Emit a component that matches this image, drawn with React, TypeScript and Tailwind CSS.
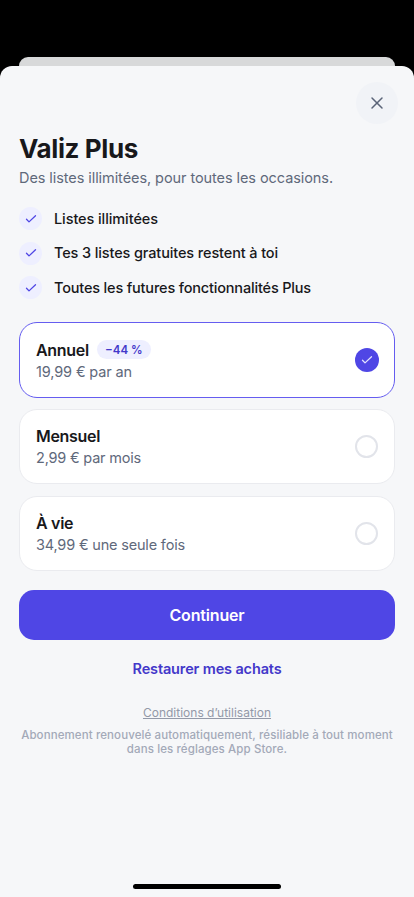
import React from "react";
import { X } from "lucide-react";

const FEATURES = [
  { label: "Listes illimitées", tracking: "tracking-[-0.085px]" },
  { label: "Tes 3 listes gratuites restent à toi", tracking: "tracking-[-0.124px]" },
  { label: "Toutes les futures fonctionnalités Plus", tracking: "tracking-[-0.175px]" },
];

const PLANS = [
  { name: "Annuel", price: "19,99 € par an", tracking: "tracking-[-0.13px]", badge: "−44 %" },
  { name: "Mensuel", price: "2,99 € par mois", tracking: "tracking-[-0.2px]" },
  { name: "À vie", price: "34,99 € une seule fois", tracking: "tracking-[-0.18px]" },
];

const CheckMark: React.FC = () => (
  <svg
    width="14"
    height="14"
    viewBox="0 0 14 14"
    fill="none"
    stroke="currentColor"
    strokeWidth="1.3"
    strokeLinecap="round"
    strokeLinejoin="round"
  >
    <path d="M2.5 7.3 5 9.9 11.5 3.8" />
  </svg>
);

export default function App() {
  const [selected, setSelected] = React.useState("Annuel");

  return (
    <div className="flex h-[897px] w-[414px] flex-col bg-black pt-[57px] font-['Inter','Liberation_Sans',sans-serif] text-[#18181b]">
      <div className="mx-[19px] h-[10px] shrink-0 rounded-t-[9px] bg-[#d8d9da]" />
      <main className="-mt-px flex flex-1 flex-col rounded-t-[12px] bg-[#f6f7f9] px-[19px] pt-[16px]">
        <button
          aria-label="Fermer"
          className="-mr-[3px] flex size-[42px] items-center justify-center self-end rounded-full bg-[#f1f3f7] text-[#5b6478]"
        >
          <X size={20} strokeWidth={1.8} />
        </button>

        <h1 className="mt-[8px] h-[34px] text-[26px] leading-[34px] font-bold tracking-[-0.38px]">
          Valiz Plus
        </h1>
        <p className="mt-[2px] h-[20px] text-[14.5px] leading-[20px] tracking-[-0.074px] text-[#5f697b]">
          Des listes illimitées, pour toutes les occasions.
        </p>

        <ul className="mt-[19px] flex flex-col gap-[11.5px]">
          {FEATURES.map((feature) => (
            <li key={feature.label} className="flex h-[23px] items-center gap-3">
              <span className="flex size-[23px] items-center justify-center rounded-full bg-[#eeefff] text-[#4f46e5]">
                <CheckMark />
              </span>
              <span className={`text-[14.5px] leading-[20px] font-medium ${feature.tracking}`}>
                {feature.label}
              </span>
            </li>
          ))}
        </ul>

        <div className="mt-[23px] flex flex-col gap-[11.3px]">
          {PLANS.map((plan) => {
            const active = plan.name === selected;
            return (
              <button
                key={plan.name}
                onClick={() => setSelected(plan.name)}
                className={`flex items-center justify-between rounded-[18px] border bg-white px-4 text-left ${
                  active ? "h-[76px] border-[#655df0]" : "h-[75px] border-[#eaebef]"
                }`}
              >
                <span className="flex flex-col">
                  <span className="flex h-[22px] items-center gap-2">
                    <span className="text-[16px] leading-[22px] font-semibold tracking-[-0.3px]">
                      {plan.name}
                    </span>
                    {plan.badge && (
                      <span className="flex h-[19px] w-[54px] items-center justify-center rounded-full bg-[#eeefff] text-[11.5px] leading-[16px] font-semibold text-[#4338ca]">
                        {plan.badge}
                      </span>
                    )}
                  </span>
                  <span className={`text-[14.5px] leading-[21px] text-[#5f697b] ${plan.tracking}`}>
                    {plan.price}
                  </span>
                </span>
                {active ? (
                  <span className="-mr-px flex size-[24px] items-center justify-center rounded-full bg-[#4f46e5] text-[#e3e2fd]">
                    <CheckMark />
                  </span>
                ) : (
                  <span className="size-[23px] rounded-full border-2 border-[#e2e4ea]" />
                )}
              </button>
            );
          })}
        </div>

        <button className="mt-[19.4px] h-[50px] rounded-[15px] bg-[#4f46e5] text-[16px] font-semibold tracking-[-0.174px] text-white">
          Continuer
        </button>
        <button className="mt-[19px] h-[20px] text-[14.5px] leading-[20px] font-semibold tracking-[-0.141px] text-[#4338ca]">
          Restaurer mes achats
        </button>
        <a
          href="#"
          className="mt-[26px] h-[16px] self-center text-[12px] leading-[16px] text-[#9399a8] underline"
        >
          Conditions d’utilisation
        </a>
        <p className="mt-[7px] flex flex-col items-center text-[11.5px] leading-[14px] font-medium tracking-[0.1px] whitespace-nowrap text-[#a3a9b8]">
          <span>Abonnement renouvelé automatiquement, résiliable à tout moment</span>
          <span>dans les réglages App Store.</span>
        </p>
        <div className="mt-auto mb-[8px] h-[5px] w-[148px] self-center rounded-full bg-black" />
      </main>
    </div>
  );
}
